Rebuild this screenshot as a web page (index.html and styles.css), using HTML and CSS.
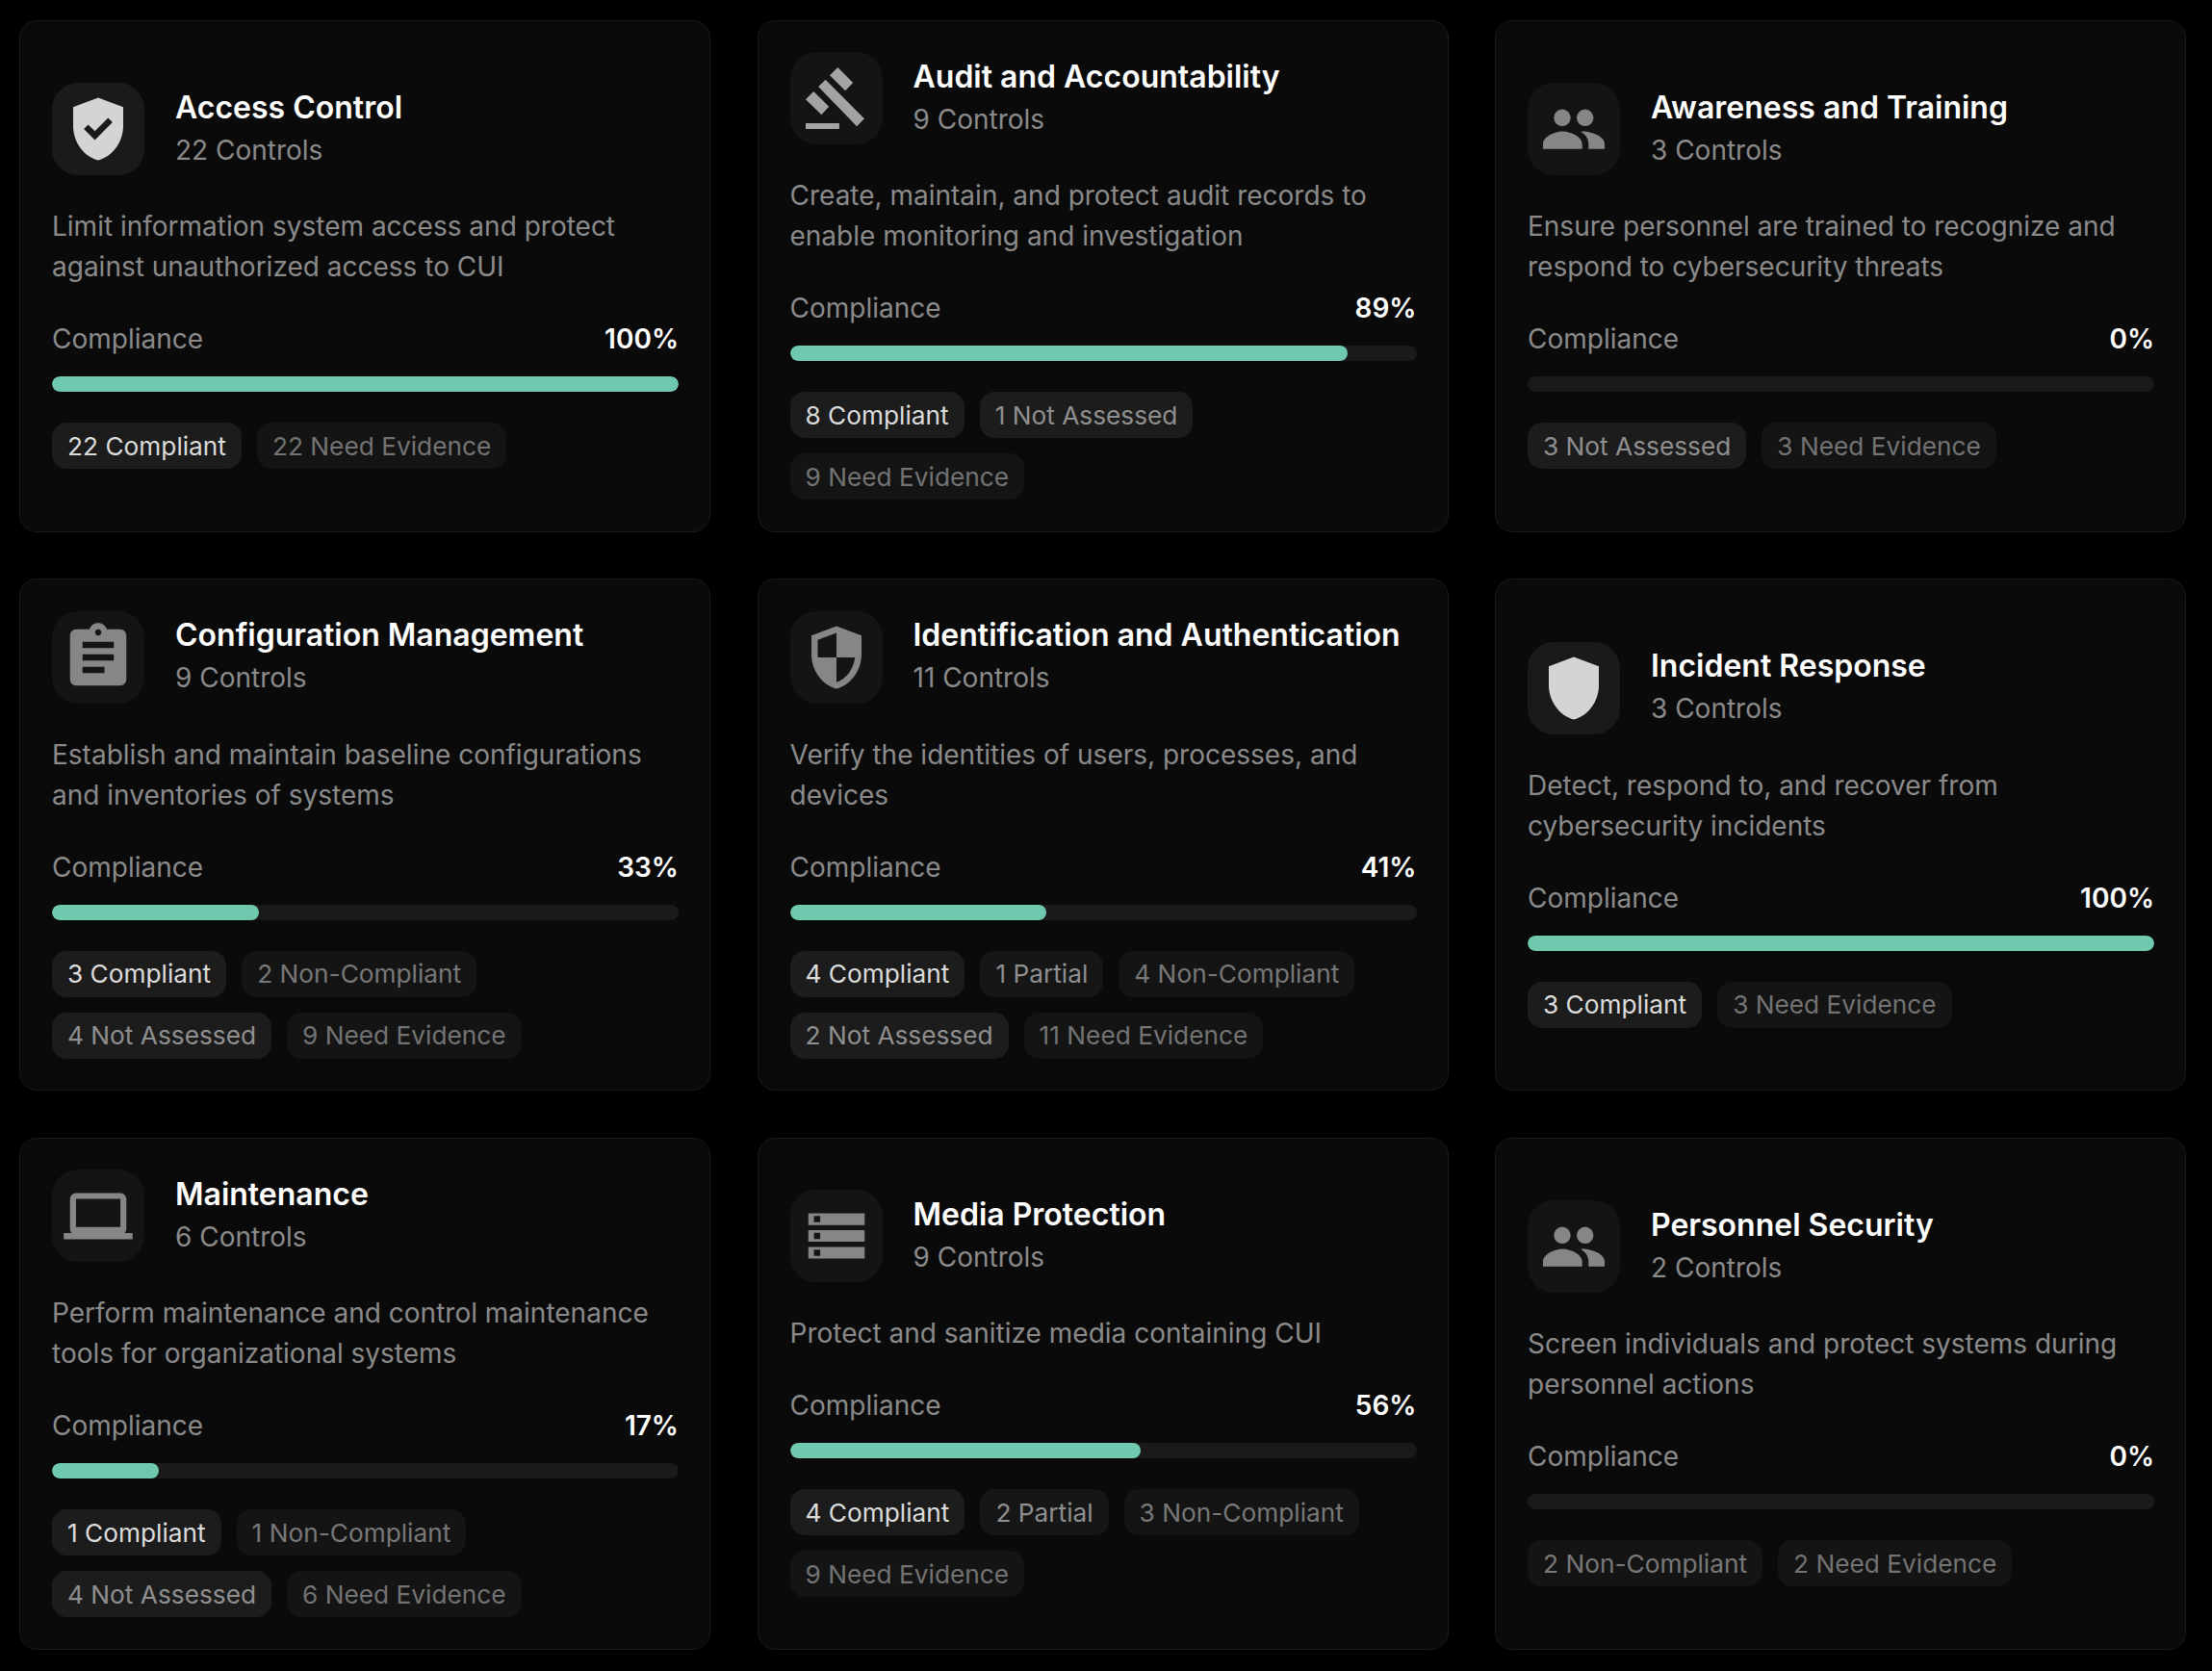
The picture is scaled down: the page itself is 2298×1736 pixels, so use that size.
FILE: index.html
```html
<!DOCTYPE html>
<html lang="en">
<head>
<meta charset="utf-8">
<title>Compliance families</title>
<link rel="stylesheet" href="styles.css">
</head>
<body>
<main class="grid">

<article class="card">
  <header class="head">
    <div class="ico ico-hi"><svg viewBox="0 0 24 24"><path d="M12 2 4 5v6.09c0 5.05 3.41 9.76 8 10.91 4.59-1.15 8-5.86 8-10.91V5l-8-3zm-1.06 13.54L7.4 12l1.41-1.41 2.12 2.12 4.24-4.24 1.41 1.41-5.64 5.66z"/></svg></div>
    <div class="names"><h2 class="title">Access Control</h2><p class="sub">22 Controls</p></div>
  </header>
  <p class="desc">Limit information system access and protect against unauthorized access to CUI</p>
  <div class="row"><span>Compliance</span><b class="pct">100%</b></div>
  <div class="track"><div class="fill" style="width:100%"></div></div>
  <div class="chips"><span class="chip ok">22 Compliant</span><span class="chip ev">22 Need Evidence</span></div>
</article>

<article class="card">
  <header class="head">
    <div class="ico ico-mid"><svg viewBox="0 0 24 24"><path d="M2.15 20H12.9v1.85H2.15zM8.5 6.05 6.2 8.3 18.5 21l2.4-2.45zM12.4 2.15 9.85 4.7l4.95 4.9 2.5-2.5zM4.7 9.85 2.15 12.4l5.05 4.9 2.4-2.6z"/></svg></div>
    <div class="names"><h2 class="title">Audit and Accountability</h2><p class="sub">9 Controls</p></div>
  </header>
  <p class="desc">Create, maintain, and protect audit records to enable monitoring and investigation</p>
  <div class="row"><span>Compliance</span><b class="pct">89%</b></div>
  <div class="track"><div class="fill" style="width:89%"></div></div>
  <div class="chips"><span class="chip ok">8 Compliant</span><span class="chip na">1 Not Assessed</span><span class="chip ev">9 Need Evidence</span></div>
</article>

<article class="card">
  <header class="head">
    <div class="ico"><svg viewBox="0 0 24 24"><circle cx="8.3" cy="8.4" r="2.67"/><circle cx="15.6" cy="8.4" r="2.67"/><path d="M2.15 18.4v-1.6c0-2.4 4-4 6.26-4s6.26 1.6 6.26 4v1.6zM14.2 12.85c.3-.03.6-.05.9-.05 2.3 0 6.75 1.5 6.75 4v1.6H16.7v-1.8c0-1.5-1-2.85-2.5-3.75z"/></svg></div>
    <div class="names"><h2 class="title">Awareness and Training</h2><p class="sub">3 Controls</p></div>
  </header>
  <p class="desc">Ensure personnel are trained to recognize and respond to cybersecurity threats</p>
  <div class="row"><span>Compliance</span><b class="pct">0%</b></div>
  <div class="track"><div class="fill" style="width:0%"></div></div>
  <div class="chips"><span class="chip na">3 Not Assessed</span><span class="chip ev">3 Need Evidence</span></div>
</article>

<article class="card">
  <header class="head">
    <div class="ico"><svg viewBox="0 0 24 24"><path d="M19 3h-4.18C14.4 1.84 13.3 1 12 1c-1.3 0-2.4.84-2.82 2H5c-1.1 0-2 .9-2 2v14c0 1.1.9 2 2 2h14c1.1 0 2-.9 2-2V5c0-1.1-.9-2-2-2zm-7 0c.55 0 1 .45 1 1s-.45 1-1 1-1-.45-1-1 .45-1 1-1zm2 14H7v-2h7v2zm3-4H7v-2h10v2zm0-4H7V7h10v2z"/></svg></div>
    <div class="names"><h2 class="title">Configuration Management</h2><p class="sub">9 Controls</p></div>
  </header>
  <p class="desc">Establish and maintain baseline configurations and inventories of systems</p>
  <div class="row"><span>Compliance</span><b class="pct">33%</b></div>
  <div class="track"><div class="fill" style="width:33%"></div></div>
  <div class="chips"><span class="chip ok">3 Compliant</span><span class="chip nc">2 Non-Compliant</span><span class="chip na">4 Not Assessed</span><span class="chip ev">9 Need Evidence</span></div>
</article>

<article class="card">
  <header class="head">
    <div class="ico"><svg viewBox="0 0 24 24"><path fill-rule="evenodd" d="M12 2 4 5v6.09c0 5.05 3.41 9.76 8 10.91 4.59-1.15 8-5.86 8-10.91V5zM12 4.14 6 6.39V12h6zM12 12v7.93c3.2-1.03 5.44-4.23 5.9-7.93z"/></svg></div>
    <div class="names"><h2 class="title">Identification and Authentication</h2><p class="sub">11 Controls</p></div>
  </header>
  <p class="desc">Verify the identities of users, processes, and devices</p>
  <div class="row"><span>Compliance</span><b class="pct">41%</b></div>
  <div class="track"><div class="fill" style="width:41%"></div></div>
  <div class="chips"><span class="chip ok">4 Compliant</span><span class="chip pa">1 Partial</span><span class="chip nc">4 Non-Compliant</span><span class="chip na">2 Not Assessed</span><span class="chip ev">11 Need Evidence</span></div>
</article>

<article class="card">
  <header class="head">
    <div class="ico ico-hi"><svg viewBox="0 0 24 24"><path d="M12 2 4 5v6.09c0 5.05 3.41 9.76 8 10.91 4.59-1.15 8-5.86 8-10.91V5z"/></svg></div>
    <div class="names"><h2 class="title">Incident Response</h2><p class="sub">3 Controls</p></div>
  </header>
  <p class="desc">Detect, respond to, and recover from cybersecurity incidents</p>
  <div class="row"><span>Compliance</span><b class="pct">100%</b></div>
  <div class="track"><div class="fill" style="width:100%"></div></div>
  <div class="chips"><span class="chip ok">3 Compliant</span><span class="chip ev">3 Need Evidence</span></div>
</article>

<article class="card">
  <header class="head">
    <div class="ico"><svg viewBox="0 0 24 24"><path fill-rule="evenodd" d="M1 19.5v-2h2.6c-.4-.3-.6-.8-.6-1.3V6.7C3 5.6 3.9 4.8 5 4.8h14c1.1 0 2 .8 2 1.9v9.5c0 .5-.2 1-.6 1.3H23v2zM4.9 6.6v9h14.2v-9z"/></svg></div>
    <div class="names"><h2 class="title">Maintenance</h2><p class="sub">6 Controls</p></div>
  </header>
  <p class="desc">Perform maintenance and control maintenance tools for organizational systems</p>
  <div class="row"><span>Compliance</span><b class="pct">17%</b></div>
  <div class="track"><div class="fill" style="width:17%"></div></div>
  <div class="chips"><span class="chip ok">1 Compliant</span><span class="chip nc">1 Non-Compliant</span><span class="chip na">4 Not Assessed</span><span class="chip ev">6 Need Evidence</span></div>
</article>

<article class="card">
  <header class="head">
    <div class="ico"><svg viewBox="0 0 24 24"><path fill-rule="evenodd" d="M3 4.8h18v3.7H3zM4.8 5.65v2h2v-2zM3 10.15h18v3.7H3zM4.8 11v2h2v-2zM3 15.5h18v3.7H3zM4.8 16.35v2h2v-2z"/></svg></div>
    <div class="names"><h2 class="title">Media Protection</h2><p class="sub">9 Controls</p></div>
  </header>
  <p class="desc">Protect and sanitize media containing CUI</p>
  <div class="row"><span>Compliance</span><b class="pct">56%</b></div>
  <div class="track"><div class="fill" style="width:56%"></div></div>
  <div class="chips"><span class="chip ok">4 Compliant</span><span class="chip pa">2 Partial</span><span class="chip nc">3 Non-Compliant</span><span class="chip ev">9 Need Evidence</span></div>
</article>

<article class="card">
  <header class="head">
    <div class="ico"><svg viewBox="0 0 24 24"><circle cx="8.3" cy="8.4" r="2.67"/><circle cx="15.6" cy="8.4" r="2.67"/><path d="M2.15 18.4v-1.6c0-2.4 4-4 6.26-4s6.26 1.6 6.26 4v1.6zM14.2 12.85c.3-.03.6-.05.9-.05 2.3 0 6.75 1.5 6.75 4v1.6H16.7v-1.8c0-1.5-1-2.85-2.5-3.75z"/></svg></div>
    <div class="names"><h2 class="title">Personnel Security</h2><p class="sub">2 Controls</p></div>
  </header>
  <p class="desc">Screen individuals and protect systems during personnel actions</p>
  <div class="row"><span>Compliance</span><b class="pct">0%</b></div>
  <div class="track"><div class="fill" style="width:0%"></div></div>
  <div class="chips"><span class="chip nc">2 Non-Compliant</span><span class="chip ev">2 Need Evidence</span></div>
</article>

</main>
</body>
</html>
```

FILE: styles.css
```css
* { box-sizing: border-box; }
html, body { margin: 0; background: #000; }
body {
  padding: 20.5px 26px 0 20px;
  font-family: Inter, "Liberation Sans", sans-serif;
  color: #8a8a8a;
  height: 1736px;
  overflow: hidden;
}
.grid {
  display: grid;
  grid-template-columns: repeat(3, 718px);
  grid-auto-rows: 532px;
  column-gap: 48.5px;
  row-gap: 48.5px;
}
.card {
  display: flex;
  flex-direction: column;
  justify-content: center;
  padding: 0 32px 0 33px;
  background: #0a0a0a;
  border: 1px solid #1a1a1a;
  border-radius: 18px;
}
.head { display: flex; align-items: center; gap: 32px; margin-bottom: 32px; }
.names { padding-bottom: 1.5px; }
.ico {
  flex: none;
  width: 96px;
  height: 96px;
  display: flex;
  align-items: center;
  justify-content: center;
  border-radius: 27px;
  background: #141414;
}
.ico svg { width: 78px; height: 78px; fill: #868686; }
.ico-hi { background: #1a1a1a; }
.ico-hi svg { fill: #d4d4d4; }
.ico-mid svg { fill: #a3a3a3; }
.title { margin: 0; font-size: 32px; line-height: 44px; font-weight: 600; color: #fff; }
.sub { margin: 1px 0 0; font-size: 28px; line-height: 42px; color: #8a8a8a; }
.desc { margin: 0 0 33px; font-size: 28px; line-height: 42px; color: #8a8a8a; }
.row { display: flex; justify-content: space-between; font-size: 28px; line-height: 42px; margin-bottom: 18px; }
.pct { font-weight: 600; color: #fff; }
.track { height: 16px; border-radius: 8px; background: #1a1a1a; overflow: hidden; }
.fill { height: 100%; border-radius: 8px; background: #6fc9ae; }
.chips { display: flex; flex-wrap: wrap; gap: 16px; margin-top: 32px; }
.chip { height: 48px; padding: 0 16px; display: flex; align-items: center; border-radius: 15px; font-size: 26.25px; }
.ok { background: #1c1c1c; color: #dcdcdc; }
.pa { background: #161616; color: #8f8f8f; }
.na { background: #1c1c1c; color: #8f8f8f; }
.nc { background: #141414; color: #787878; }
.ev { background: #141414; color: #737373; }
```
